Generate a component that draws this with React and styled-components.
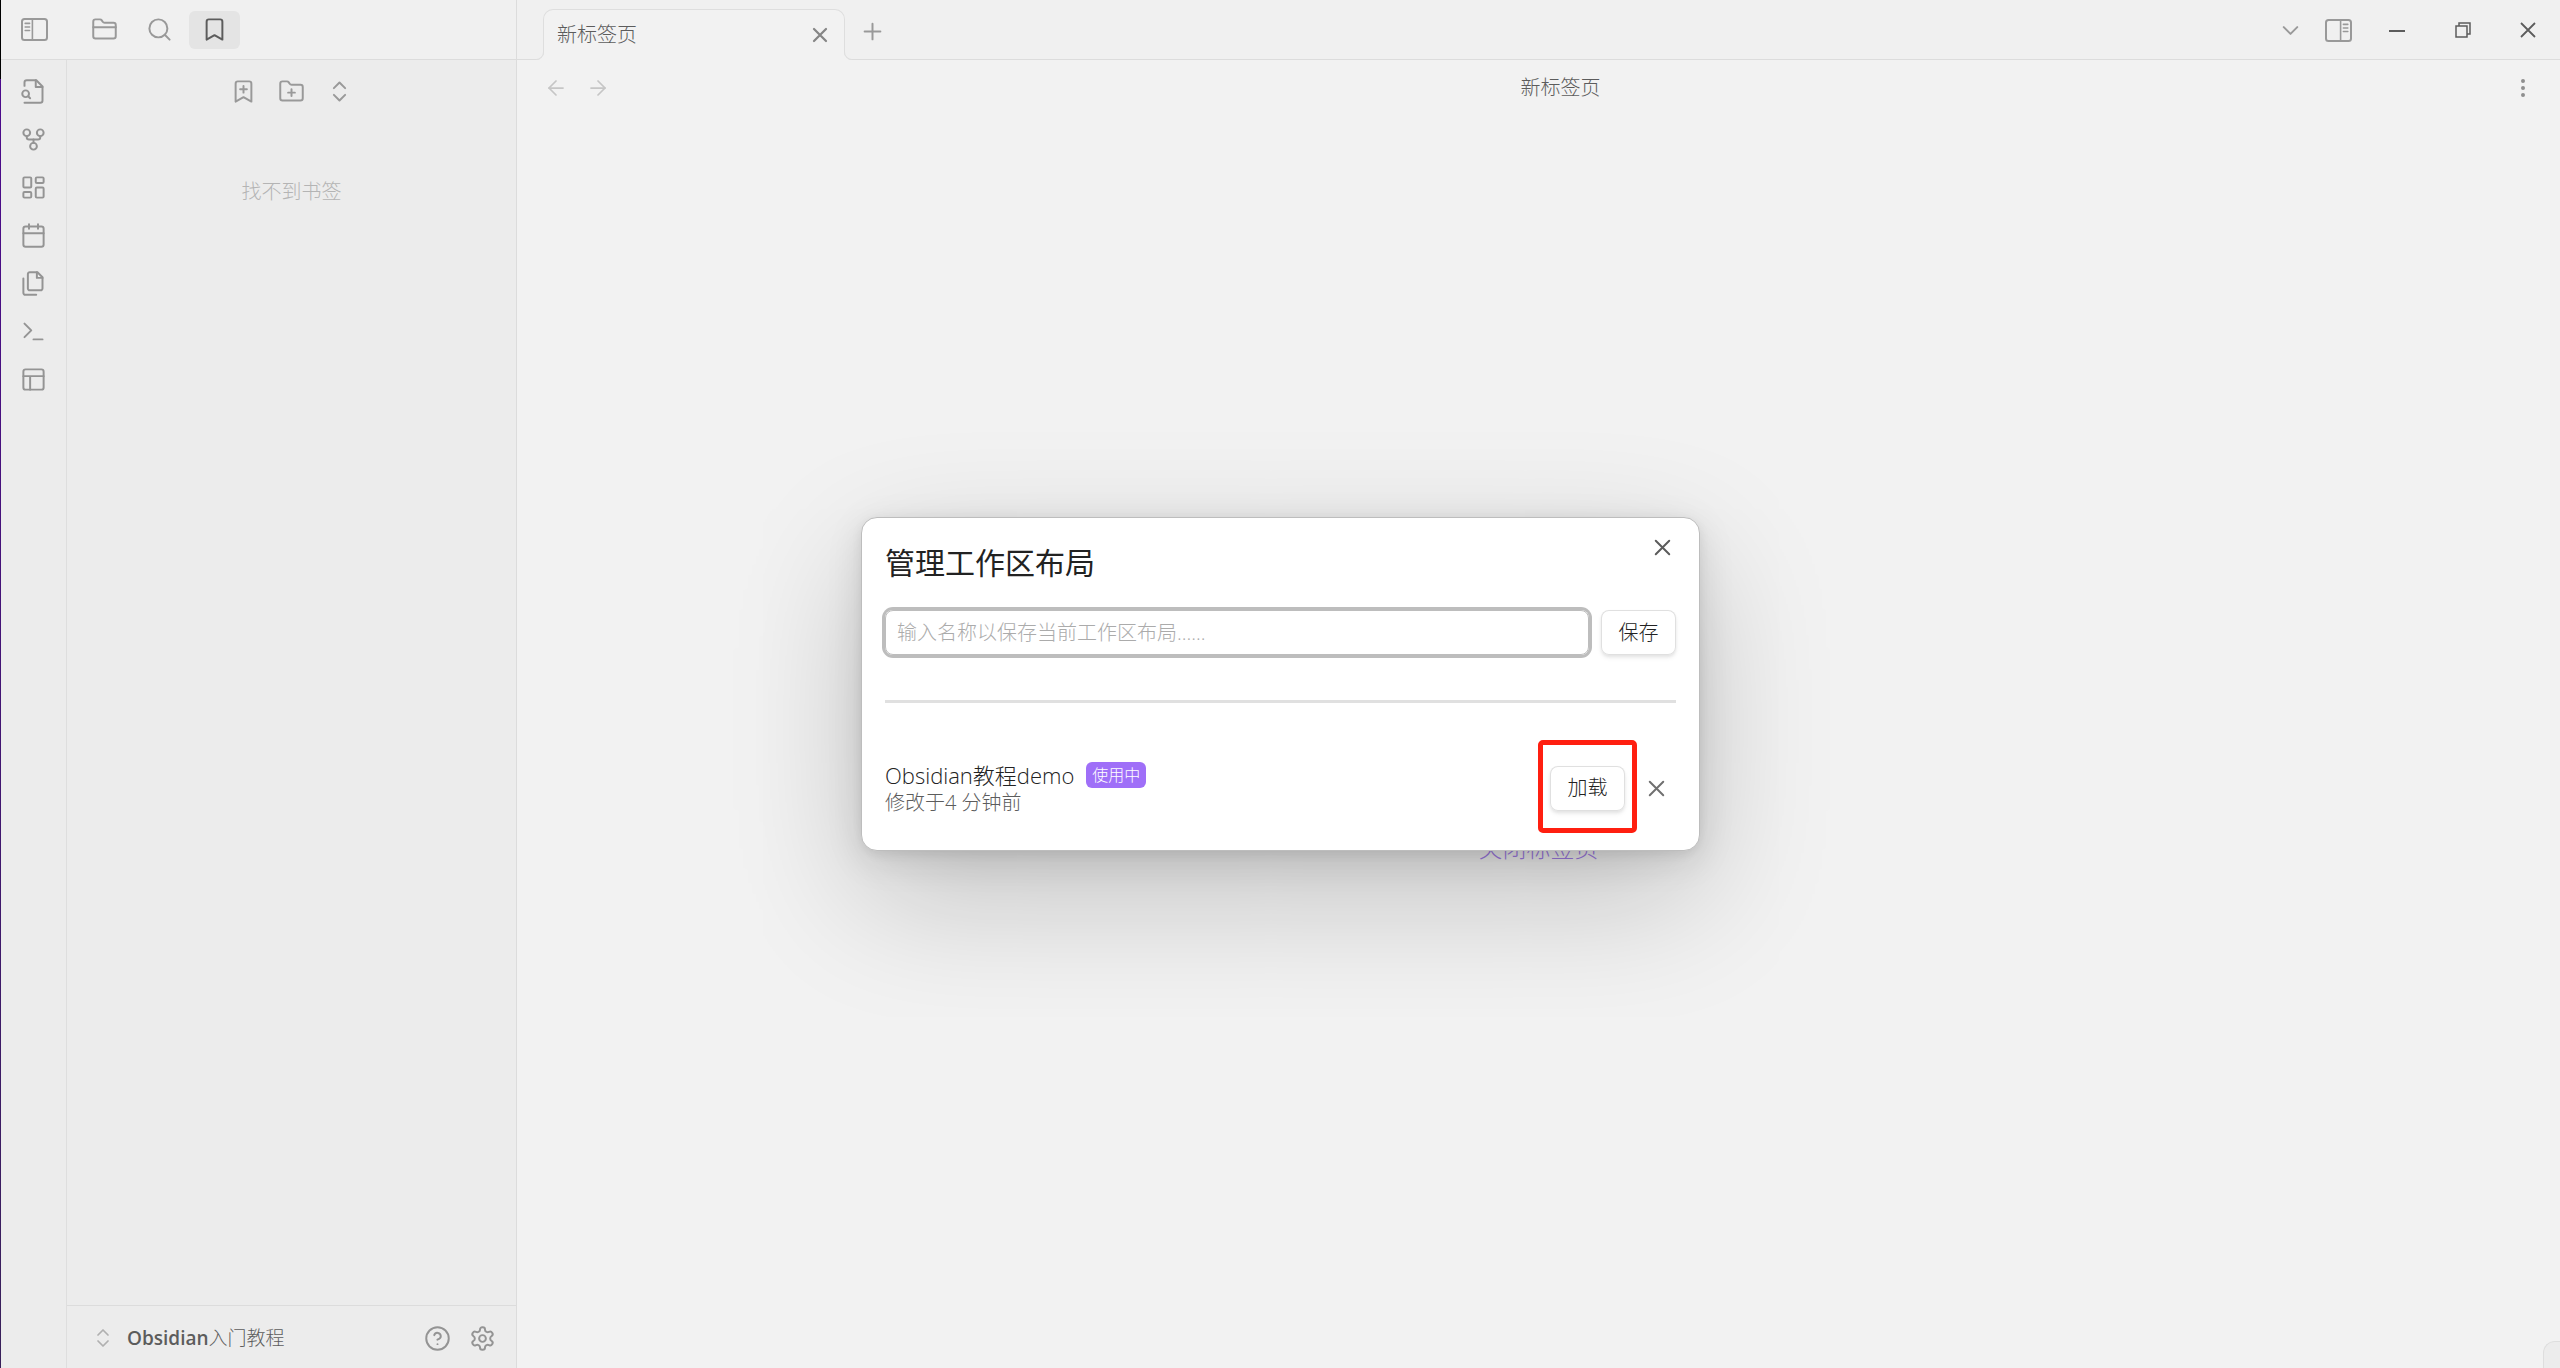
import React from "react";
import styled, { createGlobalStyle, css } from "styled-components";

const RIBBON = [
  { label: "打开快速切换", icon: "fileSearch" },
  { label: "查看关系图谱", icon: "fork" },
  { label: "新建白板", icon: "dashboard" },
  { label: "打开今天的日记", icon: "calendar" },
  { label: "插入模板", icon: "files" },
  { label: "打开命令面板", icon: "terminal" },
  { label: "管理工作区布局", icon: "layout" },
];

const ICONS = {
  fileSearch: (
    <>
      <path d="M4 22h14a2 2 0 0 0 2-2V7.5L14.5 2H6a2 2 0 0 0-2 2v3" />
      <path d="M14 2v6h6" />
      <circle cx="5" cy="14" r="3" />
      <path d="m9 18-1.5-1.5" />
    </>
  ),
  fork: (
    <>
      <circle cx="12" cy="18" r="3" />
      <circle cx="6" cy="6" r="3" />
      <circle cx="18" cy="6" r="3" />
      <path d="M18 9v1a2 2 0 0 1-2 2H8a2 2 0 0 1-2-2V9" />
      <path d="M12 12v3" />
    </>
  ),
  dashboard: (
    <>
      <rect x="3" y="3" width="7" height="9" rx="1" />
      <rect x="14" y="3" width="7" height="5" rx="1" />
      <rect x="14" y="12" width="7" height="9" rx="1" />
      <rect x="3" y="16" width="7" height="5" rx="1" />
    </>
  ),
  calendar: (
    <>
      <rect x="3" y="4" width="18" height="18" rx="2" />
      <path d="M16 2v4M8 2v4M3 10h18" />
    </>
  ),
  files: (
    <>
      <path d="M15.5 2H8.6c-.4 0-.8.2-1.1.5-.3.3-.5.7-.5 1.1v12.8c0 .4.2.8.5 1.1.3.3.7.5 1.1.5h9.8c.4 0 .8-.2 1.1-.5.3-.3.5-.7.5-1.1V6.5L15.5 2z" />
      <path d="M3 7.6v12.8c0 .4.2.8.5 1.1.3.3.7.5 1.1.5h9.8" />
      <path d="M15 2v5h5" />
    </>
  ),
  terminal: (
    <>
      <path d="m4 17 6-6-6-6" />
      <path d="M12 19h8" />
    </>
  ),
  layout: (
    <>
      <rect x="3" y="3" width="18" height="18" rx="2" />
      <path d="M3 9h18M9 21V9" />
    </>
  ),
  folder: (
    <>
      <path d="M4 20h16a2 2 0 0 0 2-2V8a2 2 0 0 0-2-2h-7.93a2 2 0 0 1-1.66-.9l-.82-1.2A2 2 0 0 0 7.93 3H4a2 2 0 0 0-2 2v13c0 1.1.9 2 2 2Z" />
      <path d="M2 10h20" />
    </>
  ),
  folderPlus: (
    <>
      <path d="M4 20h16a2 2 0 0 0 2-2V8a2 2 0 0 0-2-2h-7.93a2 2 0 0 1-1.66-.9l-.82-1.2A2 2 0 0 0 7.93 3H4a2 2 0 0 0-2 2v13c0 1.1.9 2 2 2Z" />
      <path d="M12 10v6M9 13h6" />
    </>
  ),
  search: (
    <>
      <circle cx="11" cy="11" r="8" />
      <path d="m21 21-4.3-4.3" />
    </>
  ),
  bookmark: <path d="m19 21-7-4-7 4V5a2 2 0 0 1 2-2h10a2 2 0 0 1 2 2v16z" />,
  bookmarkPlus: (
    <>
      <path d="m19 21-7-4-7 4V5a2 2 0 0 1 2-2h10a2 2 0 0 1 2 2v16z" />
      <path d="M12 7v6M15 10H9" />
    </>
  ),
  upDown: (
    <>
      <path d="m7 15 5 5 5-5" />
      <path d="m7 9 5-5 5 5" />
    </>
  ),
  chevronDown: <path d="m6 9 6 6 6-6" />,
  close: <path d="M18 6 6 18M6 6l12 12" />,
  plus: <path d="M12 5v14M5 12h14" />,
  arrowLeft: (
    <>
      <path d="m12 19-7-7 7-7" />
      <path d="M19 12H5" />
    </>
  ),
  arrowRight: (
    <>
      <path d="M5 12h14" />
      <path d="m12 5 7 7-7 7" />
    </>
  ),
  more: (
    <>
      <circle cx="12" cy="12" r="1" />
      <circle cx="12" cy="5" r="1" />
      <circle cx="12" cy="19" r="1" />
    </>
  ),
  help: (
    <>
      <circle cx="12" cy="12" r="10" />
      <path d="M9.09 9a3 3 0 0 1 5.83 1c0 2-3 3-3 3" />
      <path d="M12 17h.01" />
    </>
  ),
  settings: (
    <>
      <path d="M12.22 2h-.44a2 2 0 0 0-2 2v.18a2 2 0 0 1-1 1.73l-.43.25a2 2 0 0 1-2 0l-.15-.08a2 2 0 0 0-2.73.73l-.22.38a2 2 0 0 0 .73 2.73l.15.1a2 2 0 0 1 1 1.72v.51a2 2 0 0 1-1 1.74l-.15.09a2 2 0 0 0-.73 2.73l.22.38a2 2 0 0 0 2.73.73l.15-.08a2 2 0 0 1 2 0l.43.25a2 2 0 0 1 1 1.73V20a2 2 0 0 0 2 2h.44a2 2 0 0 0 2-2v-.18a2 2 0 0 1 1-1.73l.43-.25a2 2 0 0 1 2 0l.15.08a2 2 0 0 0 2.73-.73l.22-.39a2 2 0 0 0-.73-2.73l-.15-.08a2 2 0 0 1-1-1.74v-.5a2 2 0 0 1 1-1.74l.15-.09a2 2 0 0 0 .73-2.73l-.22-.38a2 2 0 0 0-2.73-.73l-.15.08a2 2 0 0 1-2 0l-.43-.25a2 2 0 0 1-1-1.73V4a2 2 0 0 0-2-2z" />
      <circle cx="12" cy="12" r="3" />
    </>
  ),
};

function Icon({ name, size = 27, stroke = 1.75 }) {
  return (
    <svg
      width={size}
      height={size}
      viewBox="0 0 24 24"
      fill="none"
      stroke="currentColor"
      strokeWidth={stroke}
      strokeLinecap="round"
      strokeLinejoin="round"
      aria-hidden="true"
    >
      {ICONS[name]}
    </svg>
  );
}

function PanelIcon({ side }) {
  const right = side === "right";
  return (
    <svg width="27" height="23" viewBox="0 0 27 23" fill="none" stroke="currentColor" aria-hidden="true">
      <g transform={right ? "matrix(-1 0 0 1 27 0)" : undefined}>
        <rect x="1" y="1" width="25" height="21" rx="2.5" strokeWidth="2" />
        <path d="M11.4 1v21" strokeWidth="1.6" />
        <path d="M4.2 5.4h4.4M4.2 9h4.4M4.2 12.5h4.4" strokeWidth="1.6" strokeLinecap="round" />
      </g>
    </svg>
  );
}

export default function App() {
  return (
    <>
      <GlobalStyle />
      <Shell>
        <TitleBar>
          <SideTabs>
            <ToggleButton aria-label="折叠左侧边栏">
              <PanelIcon side="left" />
            </ToggleButton>
            <SideTabList>
              <SideTab aria-label="文件列表">
                <Icon name="folder" />
              </SideTab>
              <SideTab aria-label="搜索">
                <Icon name="search" />
              </SideTab>
              <SideTab aria-label="书签" $active>
                <Icon name="bookmark" />
              </SideTab>
            </SideTabList>
          </SideTabs>
          <TabStrip>
            <Tab>
              <span>新标签页</span>
              <TabClose aria-label="关闭">
                <Icon name="close" size={24} stroke={2.25} />
              </TabClose>
            </Tab>
            <NewTab aria-label="新建标签页">
              <Icon name="plus" />
            </NewTab>
          </TabStrip>
          <TabActions>
            <IconButton aria-label="标签页列表">
              <Icon name="chevronDown" />
            </IconButton>
            <IconButton aria-label="展开右侧边栏">
              <PanelIcon side="right" />
            </IconButton>
          </TabActions>
          <WindowControls>
            <WindowButton aria-label="最小化">
              <svg width="16" height="16" viewBox="0 0 16 16" stroke="currentColor" strokeWidth="2">
                <path d="M0 9h16" />
              </svg>
            </WindowButton>
            <WindowButton aria-label="向下还原">
              <svg width="16" height="16" viewBox="0 0 16 16" fill="none" stroke="currentColor" strokeWidth="1.5">
                <path d="M1 4h11v11H1z" />
                <path d="M4 4V1h11v11h-3" />
              </svg>
            </WindowButton>
            <WindowButton aria-label="关闭窗口">
              <svg width="16" height="16" viewBox="0 0 16 16" stroke="currentColor" strokeWidth="1.8">
                <path d="M1 1l14 14M15 1L1 15" />
              </svg>
            </WindowButton>
          </WindowControls>
        </TitleBar>

        <Body>
          <Ribbon>
            {RIBBON.map((item) => (
              <RibbonButton key={item.icon} aria-label={item.label}>
                <Icon name={item.icon} />
              </RibbonButton>
            ))}
          </Ribbon>

          <Sidebar>
            <NavHeader>
              <NavButton aria-label="添加书签">
                <Icon name="bookmarkPlus" />
              </NavButton>
              <NavButton aria-label="新建分组">
                <Icon name="folderPlus" />
              </NavButton>
              <NavButton aria-label="全部展开">
                <Icon name="upDown" />
              </NavButton>
            </NavHeader>
            <EmptyNote>找不到书签</EmptyNote>
            <VaultBar>
              <VaultSwitcher>
                <Icon name="upDown" size={24} />
                <VaultName>
                  <b>Obsidian</b>入门教程
                </VaultName>
              </VaultSwitcher>
              <VaultActions>
                <PlainButton aria-label="帮助">
                  <Icon name="help" />
                </PlainButton>
                <PlainButton aria-label="设置">
                  <Icon name="settings" />
                </PlainButton>
              </VaultActions>
            </VaultBar>
          </Sidebar>

          <Main>
            <ViewHeader>
              <HeaderButton aria-label="后退" $faint>
                <Icon name="arrowLeft" size={24} />
              </HeaderButton>
              <HeaderButton aria-label="前进" $faint>
                <Icon name="arrowRight" size={24} />
              </HeaderButton>
              <ViewTitle>新标签页</ViewTitle>
              <HeaderButton aria-label="更多选项">
                <Icon name="more" size={24} stroke={2} />
              </HeaderButton>
            </ViewHeader>
            <EmptyState>
              <EmptyAction href="#close">关闭标签页</EmptyAction>
            </EmptyState>
          </Main>
        </Body>

        <StatusBar />

        <Overlay>
          <Modal role="dialog" aria-modal="true" aria-labelledby="modal-title">
            <ModalClose aria-label="关闭">
              <Icon name="close" />
            </ModalClose>
            <ModalTitle id="modal-title">管理工作区布局</ModalTitle>
            <SaveRow>
              <NameInput
                type="text"
                aria-label="工作区布局名称"
                placeholder="输入名称以保存当前工作区布局......"
              />
              <Button>保存</Button>
            </SaveRow>
            <Divider />
            <LayoutItem>
              <LayoutInfo>
                <LayoutName>
                  Obsidian教程demo
                  <Badge>使用中</Badge>
                </LayoutName>
                <LayoutMeta>修改于4 分钟前</LayoutMeta>
              </LayoutInfo>
              <Highlight>
                <Button>加载</Button>
              </Highlight>
              <DeleteButton aria-label="删除">
                <Icon name="close" />
              </DeleteButton>
            </LayoutItem>
          </Modal>
        </Overlay>
      </Shell>
    </>
  );
}

const GlobalStyle = createGlobalStyle`
  * {
    box-sizing: border-box;
  }

  body {
    margin: 0;
    background-color: #f2f2f2;
    color: #5c5c5c;
    font-family: "Open Sans", "Noto Sans CJK SC", sans-serif;
    font-size: 20px;
    font-weight: 300;
    line-height: 26px;
  }

  button, input {
    margin: 0;
    padding: 0;
    border: 0;
    background: none;
    color: inherit;
    font: inherit;
  }

  svg {
    display: block;
    flex: none;
  }
`;

const center = css`
  display: flex;
  align-items: center;
  justify-content: center;
`;

const Shell = styled.div`
  position: relative;
  display: flex;
  flex-direction: column;
  min-height: 100vh;
  overflow: hidden;
  border-left: 1px solid;
  border-image: linear-gradient(#000 80px, #4c0a8c 80px, #38205a) 1;
`;

const TitleBar = styled.header`
  display: flex;
  height: 60px;
  border-bottom: 1px solid #dcdcdc;
  background-color: #f0f0f0;
  color: #999;
`;

const SideTabs = styled.div`
  display: flex;
  align-items: center;
  width: 516px;
  border-right: 1px solid #dcdcdc;
`;

const ToggleButton = styled.button`
  ${center}
  width: 67px;
  height: 38px;
`;

const SideTabList = styled.div`
  display: flex;
  gap: 4px;
  padding-left: 11px;
`;

const SideTab = styled.button`
  ${center}
  width: 51px;
  height: 38px;
  border-radius: 6px;
  background-color: ${(props) => (props.$active ? "#e4e4e4" : "transparent")};
  color: ${(props) => (props.$active ? "#5c5c5c" : "#999")};
`;

const TabStrip = styled.div`
  display: flex;
  flex: 1;
  align-items: flex-end;
  padding-left: 26px;
`;

const Tab = styled.div`
  position: relative;
  display: flex;
  align-items: center;
  justify-content: space-between;
  width: 302px;
  height: 51px;
  margin-bottom: -1px;
  padding: 0 12px 0 13px;
  border: 1px solid #dedede;
  border-bottom: 0;
  border-radius: 10px 10px 0 0;
  background-color: #f2f2f2;
  color: #5c5c5c;

  /* curved feet that join the tab to the line below */
  &::before,
  &::after {
    content: "";
    position: absolute;
    bottom: 0;
    width: 16px;
    height: 16px;
    border-radius: 50%;
    box-shadow: inset 0 0 0 1px #dedede, 0 0 0 8px #f2f2f2;
  }

  &::before {
    left: -16px;
    clip-path: inset(50% 0 0 50%);
  }

  &::after {
    right: -16px;
    clip-path: inset(50% 50% 0 0);
  }
`;

const TabClose = styled.button`
  ${center}
  width: 24px;
  height: 24px;
  color: #868686;
`;

const NewTab = styled.button`
  ${center}
  width: 27px;
  height: 38px;
  margin: 0 14px 9px;
`;

const TabActions = styled.div`
  display: flex;
  align-items: center;
  padding: 2px 2px 0 0;
`;

const IconButton = styled.button`
  ${center}
  width: 48px;
  height: 38px;
`;

const WindowControls = styled.div`
  display: flex;
  align-items: center;
  color: #5c5c5c;
`;

const WindowButton = styled.button`
  ${center}
  width: 66px;
  height: 58px;

  &:last-child {
    width: 64px;
  }
`;

const Body = styled.div`
  display: flex;
  flex: 1;
`;

const Ribbon = styled.nav`
  display: flex;
  flex-direction: column;
  gap: 1px;
  width: 66px;
  padding-top: 8px;
  border-right: 1px solid #dedede;
  background-color: #ececec;
  color: #949494;
`;

const RibbonButton = styled.button`
  ${center}
  height: 47px;
`;

const Sidebar = styled.aside`
  display: flex;
  flex-direction: column;
  width: 450px;
  border-right: 1px solid #dcdcdc;
  background-color: #ececec;
`;

const NavHeader = styled.div`
  display: flex;
  justify-content: center;
  gap: 3px;
  padding-top: 12px;
  color: #999;
`;

const NavButton = styled.button`
  ${center}
  width: 45px;
  height: 39px;
`;

const EmptyNote = styled.p`
  flex: 1;
  margin: 0;
  padding-top: 68px;
  color: #b4b4b4;
  text-align: center;
`;

const VaultBar = styled.footer`
  display: flex;
  align-items: center;
  justify-content: space-between;
  height: 63px;
  padding: 2px 20px 0 24px;
  border-top: 1px solid #dcdcdc;
`;

const VaultSwitcher = styled.button`
  display: flex;
  align-items: center;
  gap: 12px;
  color: #b0b0b0;
`;

const VaultName = styled.span`
  color: #5c5c5c;
  font-size: 19px;

  b {
    font-weight: 600;
  }
`;

const VaultActions = styled.div`
  display: flex;
  gap: 18px;
  color: #949494;
`;

const PlainButton = styled.button`
  ${center}
  width: 27px;
  height: 27px;
`;

const Main = styled.main`
  display: flex;
  flex: 1;
  flex-direction: column;
`;

const ViewHeader = styled.div`
  display: flex;
  align-items: center;
  height: 56px;
  padding: 0 16px 0 18px;
`;

const HeaderButton = styled.button`
  ${center}
  width: 42px;
  height: 38px;
  color: ${(props) => (props.$faint ? "#c6c6c6" : "#8f8f8f")};
`;

const ViewTitle = styled.h1`
  flex: 1;
  margin: 0;
  font-size: 20px;
  font-weight: 300;
  text-align: center;
`;

const EmptyState = styled.div`
  ${center}
  flex: 1;
  padding-top: 212px;
`;

const EmptyAction = styled.a`
  color: #a17de6;
  font-size: 24px;
  text-decoration: none;
`;

const StatusBar = styled.div`
  position: absolute;
  right: 0;
  bottom: 0;
  width: 17px;
  height: 27px;
  border: solid #dedede;
  border-width: 1px 0 0 1px;
  border-radius: 12px 0 0 0;
  background-color: #ececec;
`;

const Overlay = styled.div`
  ${center}
  position: absolute;
  inset: 0;
`;

const Modal = styled.section`
  position: relative;
  width: 839px;
  max-width: 90%;
  padding: 23px 23px 34px;
  border: 1px solid #bdbdbd;
  border-radius: 16px;
  background-color: #fff;
  box-shadow: 0 3px 11px rgba(0, 0, 0, 0.07), 0 9px 37px rgba(0, 0, 0, 0.11),
    0 45px 135px rgba(0, 0, 0, 0.2);
`;

const ModalClose = styled.button`
  ${center}
  position: absolute;
  top: 10px;
  right: 18px;
  width: 38px;
  height: 38px;
`;

const ModalTitle = styled.h2`
  margin: 0 0 26px;
  color: #222;
  font-size: 30px;
  font-weight: 400;
  line-height: 43px;
`;

const SaveRow = styled.div`
  display: flex;
  gap: 12px;
`;

const NameInput = styled.input`
  flex: 1;
  min-width: 0;
  height: 45px;
  padding: 0 11px;
  border: 1px solid #bdbdbd;
  border-radius: 8px;
  box-shadow: 0 0 0 3px #bdbdbd;
  color: #222;
  outline: none;

  &::placeholder {
    color: #ababab;
    opacity: 1;
  }
`;

const Button = styled.button`
  width: 75px;
  height: 45px;
  border-radius: 8px;
  background-color: #fff;
  box-shadow: inset 0 0 0 1px #e0e0e0, 0 3px 5px rgba(0, 0, 0, 0.06),
    0 2px 3px rgba(0, 0, 0, 0.06);
  color: #222;
`;

const Divider = styled.hr`
  height: 3px;
  margin: 45px 0;
  border: 0;
  background-color: #e0e0e0;
`;

const LayoutItem = styled.div`
  display: flex;
  align-items: center;
  padding-top: 12px;
`;

const LayoutInfo = styled.div`
  flex: 1;
`;

const LayoutName = styled.div`
  display: flex;
  align-items: center;
  gap: 12px;
  color: #222;
  font-size: 22px;
  line-height: 30px;
`;

const Badge = styled.span`
  padding: 0 6px;
  border-radius: 6px;
  background-color: #9f6ff8;
  color: #fff;
  font-size: 16px;
  line-height: 26px;
`;

const LayoutMeta = styled.div`
  color: #5c5c5c;
`;

/* red callout drawn around the load button */
const Highlight = styled.div`
  position: relative;

  &::after {
    content: "";
    position: absolute;
    inset: -26px -12px -22px;
    border: 5px solid #ff1f10;
    border-radius: 5px;
    pointer-events: none;
  }
`;

const DeleteButton = styled.button`
  ${center}
  width: 39px;
  height: 45px;
  margin-left: 12px;
  color: #707070;
`;
